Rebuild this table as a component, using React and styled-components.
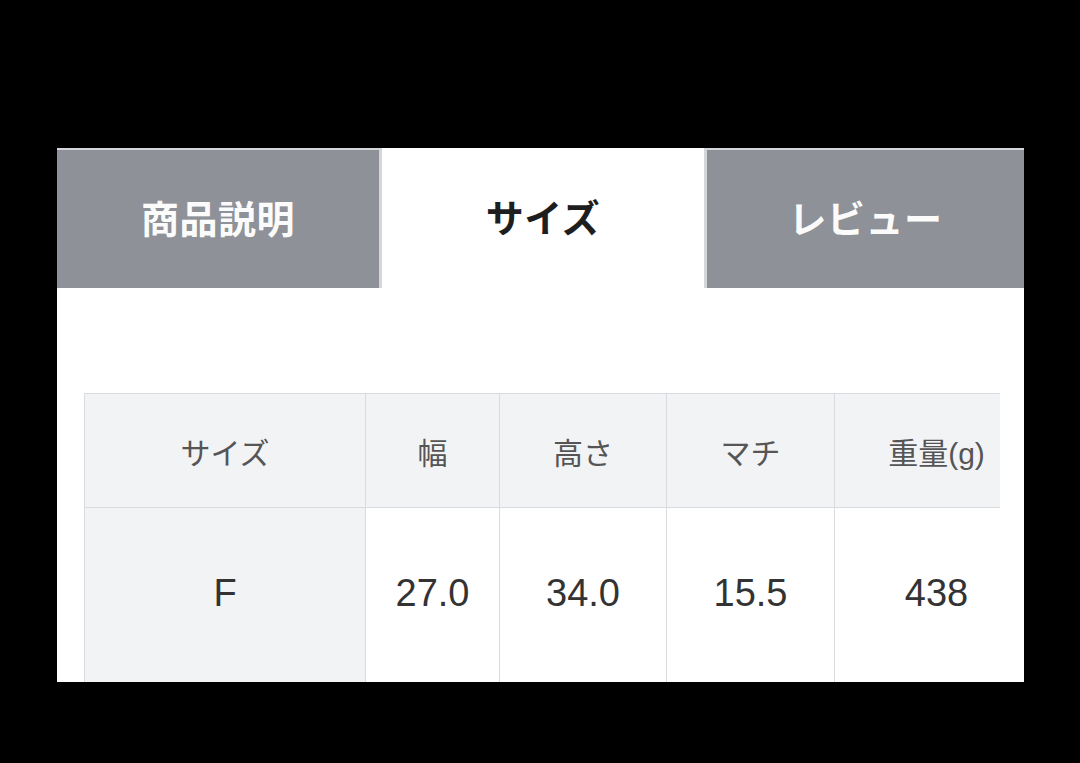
import React from "react";
import styled, { createGlobalStyle } from "styled-components";

const GlobalStyle = createGlobalStyle`
  html, body {
    margin: 0;
    padding: 0;
    background: #000;
  }
  body {
    font-family: "Liberation Sans", "Noto Sans CJK JP", sans-serif;
  }
`;

const Screen = styled.div`
  width: 1080px;
  height: 763px;
  background: #000;
  padding: 148px 0 0 57px;
  box-sizing: border-box;
`;

const Panel = styled.div`
  width: 967px;
  height: 534px;
  background: #fff;
  overflow: hidden;
  display: flex;
  flex-direction: column;
`;

const TabBar = styled.div`
  display: flex;
  height: 140px;
  flex-shrink: 0;
`;

const Tab = styled.div`
  width: ${(p) => p.$width}px;
  box-sizing: border-box;
  display: flex;
  align-items: center;
  justify-content: center;
  font-family: "Noto Sans CJK JP", sans-serif;
  font-weight: 700;
  font-size: 38px;
  letter-spacing: 0.5px;
  color: ${(p) => (p.$active ? "#1e1e1e" : "#fbfbfb")};
  background: ${(p) => (p.$active ? "#fff" : "#8e9197")};
  border-top: ${(p) => (p.$active ? "none" : "2px solid #d4d6d9")};
  border-left: ${(p) => (p.$side === "right" ? "3px solid #d4d6d9" : "none")};
  border-right: ${(p) => (p.$side === "left" ? "3px solid #d4d6d9" : "none")};
  padding-bottom: 6px;
`;

const TableArea = styled.div`
  padding: 105px 0 0 27px;
`;

const TableClip = styled.div`
  width: 916px;
  overflow: hidden;
`;

const Table = styled.table`
  border-collapse: collapse;
  table-layout: fixed;
  width: 954px;
`;

const HeadCell = styled.th`
  width: ${(p) => p.$width}px;
  height: 114px;
  box-sizing: border-box;
  background: #f2f3f5;
  border: 1px solid #d8dbdf;
  font-weight: 400;
  font-size: 30px;
  color: #555;
  text-align: center;
  vertical-align: middle;
  padding: 0;
`;

const BodyCell = styled.td`
  height: 176px;
  box-sizing: border-box;
  background: ${(p) => (p.$shaded ? "#f2f3f5" : "#fff")};
  border: 1px solid #d8dbdf;
  font-size: 38px;
  color: #333;
  text-align: center;
  vertical-align: middle;
  padding: 0 0 4px;
`;

const columns = [
  { label: "サイズ", width: 281 },
  { label: "幅", width: 134 },
  { label: "高さ", width: 167 },
  { label: "マチ", width: 168 },
  { label: "重量(g)", width: 204 },
];

const values = ["F", "27.0", "34.0", "15.5", "438"];

export default function App() {
  return (
    <>
      <GlobalStyle />
      <Screen>
        <Panel>
          <TabBar>
            <Tab $width={325} $side="left">商品説明</Tab>
            <Tab $width={322} $active>サイズ</Tab>
            <Tab $width={320} $side="right">レビュー</Tab>
          </TabBar>
          <TableArea>
            <TableClip>
              <Table>
                <thead>
                  <tr>
                    {columns.map((c) => (
                      <HeadCell key={c.label} $width={c.width}>
                        {c.label}
                      </HeadCell>
                    ))}
                  </tr>
                </thead>
                <tbody>
                  <tr>
                    {values.map((v, i) => (
                      <BodyCell key={i} $shaded={i === 0}>
                        {v}
                      </BodyCell>
                    ))}
                  </tr>
                </tbody>
              </Table>
            </TableClip>
          </TableArea>
        </Panel>
      </Screen>
    </>
  );
}
